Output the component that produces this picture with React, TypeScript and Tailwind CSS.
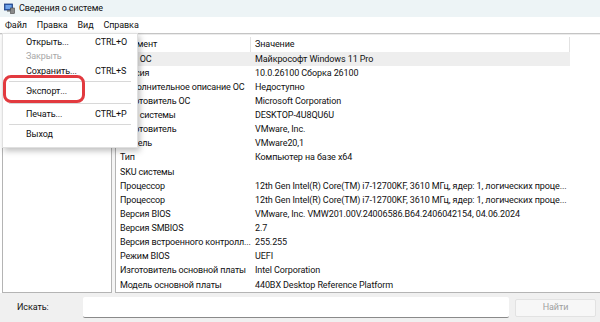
import React from 'react';

const rows: [string, string][] = [
  ['Имя ОС', 'Майкрософт Windows 11 Pro'],
  ['Версия', '10.0.26100 Сборка 26100'],
  ['Дополнительное описание ОС', 'Недоступно'],
  ['Изготовитель ОС', 'Microsoft Corporation'],
  ['Имя системы', 'DESKTOP-4U8QU6U'],
  ['Изготовитель', 'VMware, Inc.'],
  ['Модель', 'VMware20,1'],
  ['Тип', 'Компьютер на базе x64'],
  ['SKU системы', ''],
  ['Процессор', '12th Gen Intel(R) Core(TM) i7-12700KF, 3610 МГц, ядер: 1, логических проце...'],
  ['Процессор', '12th Gen Intel(R) Core(TM) i7-12700KF, 3610 МГц, ядер: 1, логических проце...'],
  ['Версия BIOS', 'VMware, Inc. VMW201.00V.24006586.B64.2406042154, 04.06.2024'],
  ['Версия SMBIOS', '2.7'],
  ['Версия встроенного контролл...', '255.255'],
  ['Режим BIOS', 'UEFI'],
  ['Изготовитель основной платы', 'Intel Corporation'],
  ['Модель основной платы', '440BX Desktop Reference Platform'],
];

function AppIcon() {
  return (
    <svg width="11" height="11" viewBox="0 0 11 11">
      <rect x="0.5" y="1" width="8" height="6" fill="#2f5fb3" stroke="#1d3f80" strokeWidth="0.8" />
      <rect x="1.5" y="2" width="6" height="4" fill="#6fa3e8" />
      <rect x="3" y="7.3" width="3" height="1.2" fill="#555" />
      <rect x="6.5" y="5" width="4" height="5.5" fill="#8a8a8a" stroke="#444" strokeWidth="0.6" />
    </svg>
  );
}

function MenuItem({ label, shortcut, disabled }: { label: string; shortcut?: string; disabled?: boolean }) {
  return (
    <div className={`h-[14.5px] flex items-center pl-[23px] ${disabled ? 'text-[#a8a8a8]' : 'text-[#111]'}`}>
      <span className="w-[69px]">{label}</span>
      {shortcut && <span>{shortcut}</span>}
    </div>
  );
}

function Sep({ h }: { h: string }) {
  return (
    <div className={`${h} flex items-center px-[6px]`}>
      <div className="h-px w-full bg-[#d8d8d8]" />
    </div>
  );
}

export default function App() {
  return (
    <div className="relative w-[600px] h-[322px] overflow-hidden bg-white flex flex-col font-['Roboto',sans-serif] text-[9px] tracking-[-0.1px] text-[#111] leading-none">
      {/* Title bar */}
      <div className="h-[17px] bg-[#edf4f6] flex items-center gap-[4px] pl-[4px] shrink-0">
        <AppIcon />
        <span>Сведения о системе</span>
      </div>

      {/* Menu bar */}
      <div className="h-[16px] bg-white flex items-center gap-[10px] pl-[5px] shrink-0">
        <span>Файл</span>
        <span>Правка</span>
        <span>Вид</span>
        <span>Справка</span>
      </div>
      <div className="h-px bg-[#c4c4c4] shrink-0" />
      <div className="h-px bg-[#ececec] shrink-0" />

      {/* Main */}
      <div className="flex-1 min-h-0 flex pt-[2px] pl-[2px] bg-white">
        <div className="w-[110px] border border-[#b4b4b4] bg-white" />
        <div className="w-[3px] bg-[#f4f4f4]" />
        <div className="flex-1 border-l border-b border-[#b4b4b4] flex flex-col">
          <div className="h-[15px] flex shrink-0">
            <div className="w-[135px] flex items-center pl-[5px] border-r border-[#e2e2e2]">Элемент</div>
            <div className="w-[319px] flex items-center pl-[4px] border-r border-[#e2e2e2]">Значение</div>
          </div>
          {rows.map(([k, v], i) => (
            <div key={i} className="h-[14.125px] flex shrink-0">
              <div className={`w-[454px] flex ${i === 0 ? 'bg-[#eeeeee]' : ''}`}>
                <div className="w-[135px] pl-[4px] flex items-center whitespace-nowrap overflow-hidden tracking-[-0.15px]">{k}</div>
                <div className="w-[319px] pl-[4px] flex items-center whitespace-nowrap overflow-hidden">{v}</div>
              </div>
            </div>
          ))}
        </div>
      </div>

      {/* Search bar */}
      <div className="h-[29px] bg-[#f0f0f0] flex items-center shrink-0">
        <span className="w-[83px] pl-[17px]">Искать:</span>
        <div className="w-[426px] h-[21px] bg-white border-b border-[#8a8a8a] rounded-[2px]" />
        <div className="ml-[6px] w-[81px] h-[18px] bg-[#f7f7f7] border border-[#e2e2e2] rounded-[2px] flex items-center justify-center text-[#a0a0a0]">
          Найти
        </div>
      </div>

      {/* File menu dropdown */}
      <div className="absolute left-[2px] top-[33px] w-[136px] bg-white border border-[#e0e0e0] shadow-[2px_3px_6px_rgba(0,0,0,0.25)] pt-[1px] pb-[5px]">
        <MenuItem label="Открыть..." shortcut="CTRL+O" />
        <MenuItem label="Закрыть" disabled />
        <MenuItem label="Сохранить..." shortcut="CTRL+S" />
        <Sep h="h-[6px]" />
        <MenuItem label="Экспорт..." />
        <Sep h="h-[8px]" />
        <MenuItem label="Печать..." shortcut="CTRL+P" />
        <Sep h="h-[6px]" />
        <MenuItem label="Выход" />
      </div>

      {/* Red highlight */}
      <div className="absolute left-[3px] top-[75px] w-[82px] h-[28px] border-[3px] border-[#e23a3f] rounded-[8px]" />
    </div>
  );
}
